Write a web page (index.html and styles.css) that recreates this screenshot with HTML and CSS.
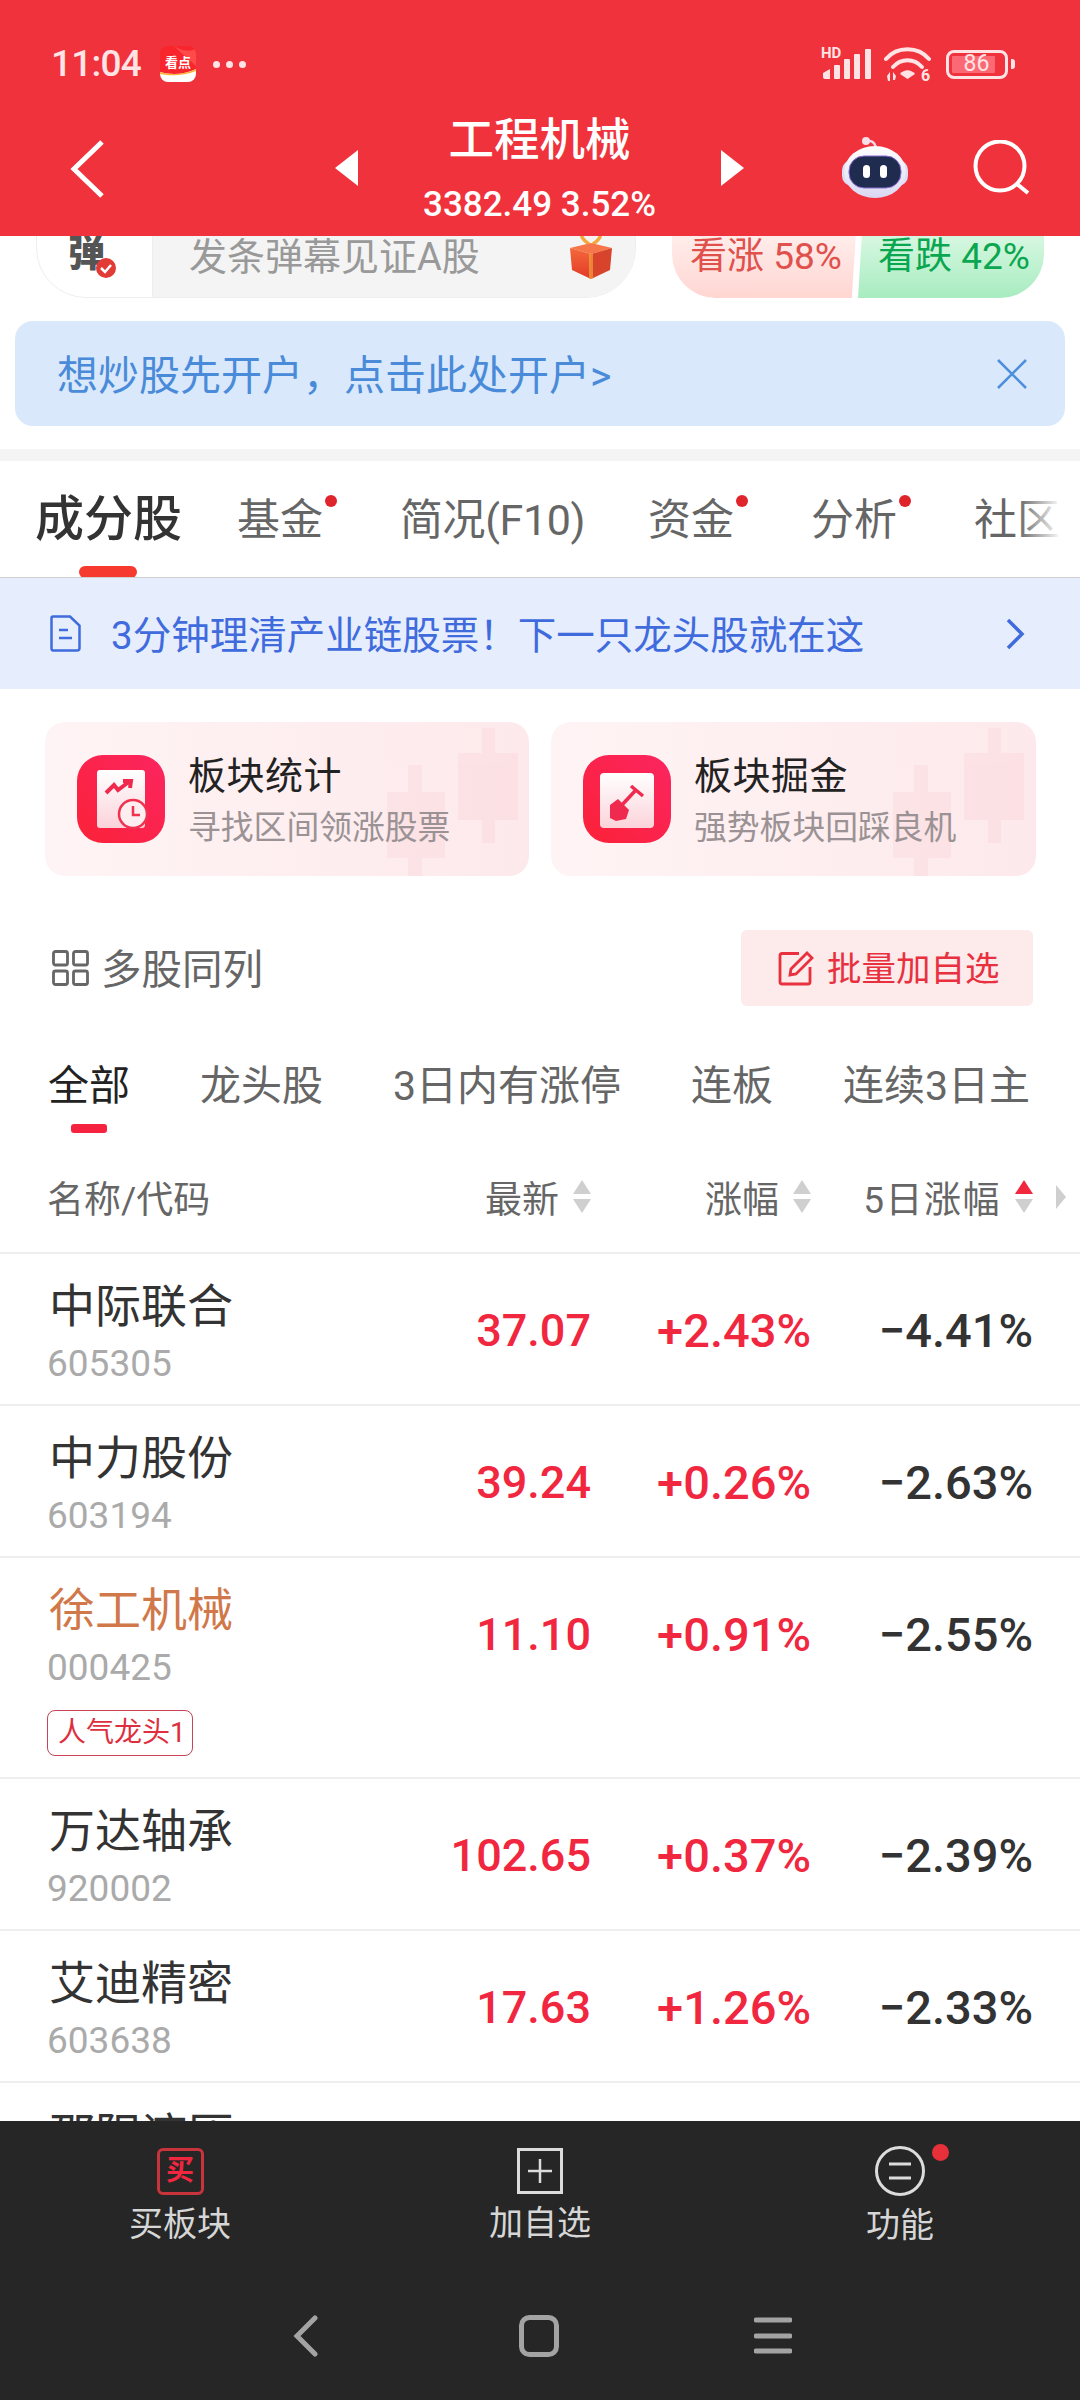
FILE: index.html
```html
<!DOCTYPE html>
<html lang="zh">
<head>
<meta charset="utf-8">
<title>工程机械</title>
<link rel="stylesheet" href="styles.css">
</head>
<body>
<div class="phone">
  <header class="top">
    <div class="status">
      <span class="clock">11:04</span>
      <svg class="appicon" width="36" height="36" viewBox="0 0 36 36">
        <defs><clipPath id="ac"><rect width="36" height="36" rx="8"/></clipPath></defs>
        <g clip-path="url(#ac)">
          <rect width="36" height="36" fill="#f9252d"/>
          <path d="M14 0c10 6 18 6 22 2v18c-6-6-14-12-22-20z" fill="#ff4a4a"/>
          <path d="M0 26c10 3 24 3 36-3v13H0z" fill="#fff"/>
          <path d="M0 26c10 3 24 3 36-3v2c-12 5-26 5-36 3z" fill="#ffb23a"/>
          <text class="appicon-txt" x="18" y="21" text-anchor="middle">看点</text>
        </g>
      </svg>
      <span class="more"><i></i><i></i><i></i></span>
      <span class="status-fill"></span>
      <span class="signal">
        <span class="hd">HD</span>
        <svg class="bars" width="48" height="30" viewBox="0 0 48 30"><g fill="#ffe3e5"><path d="M0 24l7-4v10H2q-2 0-2-2z"/><rect x="11" y="16" width="6" height="14" rx="1"/><rect x="21" y="10" width="6" height="20" rx="1"/><rect x="31" y="5" width="6" height="25" rx="1"/><rect x="42" y="0" width="6" height="30" rx="1"/></g></svg>
      </span>
      <svg class="wifi" width="52" height="40" viewBox="0 0 52 40"><g fill="none" stroke="#ffe3e5" stroke-width="4" stroke-linecap="round"><path d="M2 12C13 -1 34 -1 45 12"/><path d="M9 20C17 11 30 11 38 20"/></g><path d="M16 27c4-5 11-5 15 0l-7.500 5z" fill="#ffe3e5"/><g fill="#ffe3e5"><path d="M3 29l3-4v9H4zM9 25l3 4-1 4H9z"/></g><text class="wifi6" x="37" y="34">6</text></svg>
      <span class="battery"><span class="battery-fill"><span class="battery-num">86</span></span></span>
      <span class="battery-cap"></span>
    </div>
    <div class="nav">
      <div class="nav-left">
        <svg width="36" height="60" viewBox="0 0 36 60"><path d="M32 3L4 30l28 27" fill="none" stroke="#fff" stroke-width="5"/></svg>
      </div>
      <div class="nav-center">
        <svg class="tri" width="24" height="36" viewBox="0 0 24 36"><path d="M23 0v36L0 18z" fill="#fff"/></svg>
        <div class="nav-title">
          <div class="title">工程机械</div>
          <div class="subtitle">3382.49 3.52%</div>
        </div>
        <svg class="tri" width="24" height="36" viewBox="0 0 24 36"><path d="M1 0v36l23-18z" fill="#fff"/></svg>
      </div>
      <div class="nav-right">
        <svg class="robot" width="68" height="62" viewBox="0 0 68 62">
          <defs><linearGradient id="rb" x1="0" y1="0" x2="0" y2="1"><stop offset="0" stop-color="#fff"/><stop offset="1" stop-color="#d9d8f2"/></linearGradient></defs>
          <path d="M26 6c4-3 9 1 9 8" fill="none" stroke="#f3d6e0" stroke-width="2.500"/>
          <circle cx="25" cy="5" r="4" fill="#f6dfe8"/>
          <rect x="1" y="24" width="66" height="26" rx="10" fill="#dcdcf5"/>
          <ellipse cx="34" cy="36" rx="31" ry="26" fill="url(#rb)"/>
          <rect x="8" y="20" width="52" height="32" rx="15" fill="#1f2c50" stroke="#8a6ccf" stroke-width="1"/>
          <rect x="22" y="29" width="7" height="13" rx="3.500" fill="#fff"/>
          <rect x="39" y="29" width="7" height="13" rx="3.500" fill="#fff"/>
        </svg>
        <svg class="search" width="58" height="56" viewBox="0 0 58 56"><circle cx="27" cy="26" r="24.500" fill="none" stroke="#fff" stroke-width="4"/><path d="M44 44l11 9" stroke="#fff" stroke-width="4" fill="none"/></svg>
      </div>
    </div>
  </header>

  <main class="main">
    <section class="danmu-row">
      <div class="danmu">
        <div class="danmu-badge"><span class="dan">弹</span><span class="check"><svg width="20" height="20" viewBox="0 0 20 20"><circle cx="10" cy="10" r="10" fill="#e23b36"/><path d="M5 10l4 4 6-7" fill="none" stroke="#fff" stroke-width="2.500"/></svg></span></div>
        <div class="danmu-input">
          <span>发条弹幕见证A股</span>
          <svg class="gift" width="46" height="44" viewBox="0 0 46 44">
            <defs><linearGradient id="gf" x1="0" y1="0" x2="0" y2="1"><stop offset="0" stop-color="#f4683c"/><stop offset="1" stop-color="#e23a26"/></linearGradient></defs>
            <path d="M21 9C15 5 12 1 15-2M25 9c6-4 9-8 6-11" fill="none" stroke="#f3a83c" stroke-width="3.500"/>
            <path d="M2 13l21-5 21 5-21 6z" fill="#f6764a"/>
            <path d="M2 13l21 6v25L4 35z" fill="url(#gf)"/>
            <path d="M44 13L23 19v25l19-9z" fill="#d8442b"/>
            <path d="M21 18.500h4V44h-4z" fill="#f3a83c" fill-opacity=".65"/>
          </svg>
        </div>
      </div>
      <div class="mood">
        <div class="mood-up">看涨 58%</div>
        <div class="mood-down">看跌 42%</div>
      </div>
    </section>

    <section class="banner">
      <span>想炒股先开户，点击此处开户&gt;</span>
      <svg width="30" height="30" viewBox="0 0 30 30"><path d="M1 1l28 28M29 1L1 29" stroke="#4d8fdc" stroke-width="2.500" fill="none"/></svg>
    </section>

    <div class="band"></div>

    <nav class="tabs">
      <div class="tab tab-on">成分股<span class="tab-line"></span></div>
      <div class="tab tab-dot">基金<i class="dot"></i></div>
      <div class="tab tab-plain">简况(F10)</div>
      <div class="tab tab-dot">资金<i class="dot"></i></div>
      <div class="tab tab-dot">分析<i class="dot"></i></div>
      <div class="tab">社区</div>
      <span class="tabs-fade"></span>
    </nav>

    <section class="strip">
      <svg class="strip-doc" width="31" height="37" viewBox="0 0 31 37"><path d="M3 1.500h17l9.500 9V33q0 2.500-2.500 2.500H3Q1.500 35.500 1.500 33V3Q1.500 1.500 3 1.500z" fill="none" stroke="#3f6bdd" stroke-width="2.500"/><path d="M9 15h9M9 23h13" stroke="#3f6bdd" stroke-width="2.500" fill="none"/></svg>
      <span class="strip-text">3分钟理清产业链股票！下一只龙头股就在这</span>
      <svg width="20" height="32" viewBox="0 0 20 32"><path d="M3 2l14 14L3 30" fill="none" stroke="#3f6bdd" stroke-width="3.500"/></svg>
    </section>

    <section class="cards">
      <article class="card">
        <svg class="candles" width="484" height="154" viewBox="0 0 484 154"><g fill="#f9c0c8" opacity=".2"><rect x="437" y="6" width="13" height="115"/><rect x="413" y="31" width="60" height="67"/><rect x="363" y="43" width="14" height="111"/><rect x="342" y="70" width="58" height="66"/></g></svg>
        <span class="card-icon">
          <svg width="88" height="88" viewBox="0 0 88 88">
            <defs><linearGradient id="pg" x1="0" y1="0" x2="0" y2="1"><stop offset="0" stop-color="#fff"/><stop offset="1" stop-color="#fbd3da"/></linearGradient></defs>
            <rect x="20" y="15" width="48" height="58" rx="3" fill="url(#pg)"/>
            <path d="M29 38l8-8 4 5 12-9m-7 0h8l-1 7" fill="none" stroke="#f02a4e" stroke-width="4"/>
            <circle cx="56" cy="59" r="14" fill="#fdeef0" stroke="#f0314f" stroke-width="2.500"/>
            <path d="M56 51v9h7" fill="none" stroke="#f0314f" stroke-width="2.500"/>
          </svg>
        </span>
        <div class="card-body">
          <div class="card-title">板块统计</div>
          <div class="card-sub">寻找区间领涨股票</div>
        </div>
      </article>
      <article class="card">
        <svg class="candles" width="484" height="154" viewBox="0 0 484 154"><g fill="#f9c0c8" opacity=".2"><rect x="437" y="6" width="13" height="115"/><rect x="413" y="31" width="60" height="67"/><rect x="363" y="43" width="14" height="111"/><rect x="342" y="70" width="58" height="66"/></g></svg>
        <span class="card-icon">
          <svg width="88" height="88" viewBox="0 0 88 88">
            <rect x="17" y="18" width="54" height="55" rx="4" fill="url(#pg)"/>
            <path d="M52 36L38 51" stroke="#f02a4e" stroke-width="3.500" fill="none"/>
            <path d="M48 31l12 10" stroke="#f02a4e" stroke-width="3.500" fill="none"/>
            <path d="M27 50l8-6 11 11-3 9-10 2-6-3z" fill="#f02a4e"/>
          </svg>
        </span>
        <div class="card-body">
          <div class="card-title">板块掘金</div>
          <div class="card-sub">强势板块回踩良机</div>
        </div>
      </article>
    </section>

    <section class="tools">
      <div class="tools-left">
        <svg width="37" height="36" viewBox="0 0 37 36"><g fill="none" stroke="#666" stroke-width="2.800"><rect x="1.500" y="1.500" width="14" height="13.500" rx="2"/><rect x="21.500" y="1.500" width="14" height="13.500" rx="2"/><rect x="1.500" y="21" width="14" height="13.500" rx="2"/><rect x="21.500" y="21" width="14" height="13.500" rx="2"/></g></svg>
        <span class="tools-text">多股同列</span>
      </div>
      <div class="batch">
        <svg width="36" height="36" viewBox="0 0 36 36"><path d="M21 3.500H4Q2 3.500 2 5.500V32q0 2 2 2h26q2 0 2-2V17" fill="none" stroke="#e8303f" stroke-width="2.800"/><path d="M12 25l1-6L29 3l5 5-16 16z" fill="none" stroke="#e8303f" stroke-width="2.800"/></svg>
        <span class="batch-text">批量加自选</span>
      </div>
    </section>

    <nav class="subtabs">
      <div class="subtab subtab-on">全部<span class="subtab-line"></span></div>
      <div class="subtab">龙头股</div>
      <div class="subtab">3日内有涨停</div>
      <div class="subtab">连板</div>
      <div class="subtab">连续3日主</div>
    </nav>

    <div class="thead">
      <div class="th-name">名称/代码</div>
      <div class="th">最新<svg class="sort" width="18" height="33" viewBox="0 0 18 33"><path d="M9 0l9 14H0z" fill="#cfcfcf"/><path d="M9 33L0 19h18z" fill="#cfcfcf"/></svg></div>
      <div class="th">涨幅<svg class="sort" width="18" height="33" viewBox="0 0 18 33"><path d="M9 0l9 14H0z" fill="#cfcfcf"/><path d="M9 33L0 19h18z" fill="#cfcfcf"/></svg></div>
      <div class="th th-wide"><span>5日涨幅</span><svg class="sort" width="18" height="33" viewBox="0 0 18 33"><path d="M9 0l9 14H0z" fill="#f0273f"/><path d="M9 33L0 19h18z" fill="#cfcfcf"/></svg></div>
      <div class="th-more"><svg width="10" height="24" viewBox="0 0 10 24"><path d="M0 0l10 12L0 24z" fill="#cfcfcf"/></svg></div>
    </div>

    <div class="row">
      <div class="stock"><div class="name">中际联合</div><div class="code">605305</div></div>
      <div class="num price">37.07</div><div class="num up">+2.43%</div><div class="num down">−4.41%</div>
    </div>
    <div class="row">
      <div class="stock"><div class="name">中力股份</div><div class="code">603194</div></div>
      <div class="num price">39.24</div><div class="num up">+0.26%</div><div class="num down">−2.63%</div>
    </div>
    <div class="row row-tag">
      <div class="stock"><div class="name name-hot">徐工机械</div><div class="code">000425</div><span class="tag">人气龙头1</span></div>
      <div class="num price">11.10</div><div class="num up">+0.91%</div><div class="num down">−2.55%</div>
    </div>
    <div class="row">
      <div class="stock"><div class="name">万达轴承</div><div class="code">920002</div></div>
      <div class="num price">102.65</div><div class="num up">+0.37%</div><div class="num down">−2.39%</div>
    </div>
    <div class="row">
      <div class="stock"><div class="name">艾迪精密</div><div class="code">603638</div></div>
      <div class="num price">17.63</div><div class="num up">+1.26%</div><div class="num down">−2.33%</div>
    </div>
    <div class="row">
      <div class="stock"><div class="name name-clipped">邵阳液压</div></div>
    </div>
  </main>

  <footer class="foot">
    <div class="actions">
      <div class="action">
        <span class="buy-icon">买</span>
        <span class="action-label">买板块</span>
      </div>
      <div class="action">
        <svg width="46" height="46" viewBox="0 0 46 46"><rect x="1.500" y="1.500" width="43" height="43" fill="none" stroke="#dcdcdc" stroke-width="3"/><path d="M23 11v24M11 23h24" stroke="#dcdcdc" stroke-width="2.500" fill="none"/></svg>
        <span class="action-label">加自选</span>
      </div>
      <div class="action action-fn">
        <svg width="50" height="50" viewBox="0 0 50 50"><circle cx="25" cy="25" r="23.500" fill="none" stroke="#dcdcdc" stroke-width="3"/><path d="M14 18h22M14 32h22" stroke="#dcdcdc" stroke-width="3" fill="none"/></svg>
        <i class="fn-dot"></i>
        <span class="action-label">功能</span>
      </div>
    </div>
    <div class="sysnav">
      <svg width="26" height="42" viewBox="0 0 26 42"><path d="M23 3L5 21l18 18" fill="none" stroke="#a3a3a3" stroke-width="5" stroke-linecap="round"/></svg>
      <svg width="40" height="42" viewBox="0 0 40 42"><rect x="2.500" y="2.500" width="35" height="37" rx="8" fill="none" stroke="#a3a3a3" stroke-width="5"/></svg>
      <svg width="38" height="38" viewBox="0 0 38 38"><path d="M2 3h34M2 19h34M2 34h34" stroke="#a3a3a3" stroke-width="5" stroke-linecap="round" fill="none"/></svg>
    </div>
  </footer>
</div>
</body>
</html>
```

FILE: styles.css
```css
* { box-sizing: border-box; }
html, body { margin: 0; padding: 0; background: #fff; }
body { font-family: Roboto, "Noto Sans CJK SC", sans-serif; }
i { display: block; font-style: normal; }
svg { display: block; flex: none; }

.phone { width: 1080px; height: 2400px; display: flex; flex-direction: column; overflow: hidden; background: #fff; }

/* header */
.top { height: 236px; flex: none; background: #f0323c; color: #fff; }
.status { height: 100px; padding: 28px 65px 0 51px; display: flex; align-items: center; }
.clock { font-size: 37px; line-height: 44px; color: #ffe3e5; width: 109px; letter-spacing: -.8px; font-weight: 500; }
.appicon-txt { font-size: 13px; font-weight: 700; fill: #fff; }
.more { display: flex; gap: 6px; margin-left: 17px; }
.more i { width: 7px; height: 7px; border-radius: 50%; background: #ffe3e5; }
.status-fill { flex: 1; }
.signal { position: relative; width: 48px; height: 30px; }
.hd { position: absolute; left: -2px; top: -4px; font-size: 15px; line-height: 16px; font-weight: 700; color: #ffe3e5; }
.bars { position: absolute; left: 0; top: 0; }
.wifi { margin: 6px -5px 0 13px; }
.wifi6 { font-size: 16px; font-weight: 700; fill: #ffe3e5; }
.battery { width: 62px; height: 29px; margin-left: 15px; border: 3px solid #ffe3e5; border-radius: 8px; padding: 3px 10px 3px 3px; display: flex; }
.battery-fill { flex: 1; background: #fb6a74; display: flex; align-items: center; justify-content: center; border-radius: 1px; }
.battery-num { font-size: 23px; line-height: 20px; color: #ffe3e5; padding-left: 6px; }
.battery-cap { width: 4px; height: 10px; margin-left: 3px; background: #ffe3e5; border-radius: 0 3px 3px 0; }

.nav { height: 136px; display: grid; grid-template-columns: 335px 409px 336px; align-items: center; }
.nav-left { padding-left: 70px; padding-top: 2px; }
.nav-center { display: flex; justify-content: space-between; align-items: center; height: 100%; }
.nav-title { text-align: center; align-self: flex-start; padding-top: 13px; }
.title { font-size: 45.500px; line-height: 56px; font-weight: 500; }
.subtitle { font-size: 35px; line-height: 44px; margin-top: 14px; font-weight: 500; white-space: nowrap; }
.nav-right { display: flex; align-items: center; padding-left: 97px; gap: 64px; }
.robot { margin-top: -2px; }

/* main */
.main { flex: none; height: 1885px; overflow: hidden; }
.danmu-row { height: 62px; overflow: hidden; display: flex; align-items: flex-end; padding-left: 36px; }
.danmu { width: 600px; height: 100px; flex: none; display: flex; border: 1.5px solid #eee; border-radius: 0 0 50px 50px; overflow: hidden; }
.danmu-badge { width: 116px; position: relative; flex: none; border-right: 1.5px solid #eee; }
.dan { position: absolute; left: 31px; bottom: 20px; font-size: 37px; line-height: 44px; font-weight: 900; color: #555; }
.check { position: absolute; left: 59px; bottom: 19px; }
.danmu-input { flex: 1; background: #f4f4f4; display: flex; align-items: flex-end; justify-content: space-between; padding: 0 21px 18px 36px; font-size: 38px; line-height: 44px; color: #999; }
.mood { width: 372px; height: 100px; margin-left: 36px; flex: none; display: flex; font-size: 37px; line-height: 44px; border-radius: 0 0 44px 44px; overflow: hidden; }
.mood-up { width: 186px; padding: 0 0 19px 18px; display: flex; align-items: flex-end; background: linear-gradient(#ffecea 40%, #ffd6d2); color: #e0504c; clip-path: polygon(0 0, 100% 0, 96.700% 100%, 0 100%); white-space: nowrap; }
.mood-down { width: 186px; padding: 0 0 19px 20px; display: flex; align-items: flex-end; background: linear-gradient(#d5f7e0 40%, #a7ecc0); color: #0ba650; clip-path: polygon(3.300% 0, 100% 0, 100% 100%, 0 100%); white-space: nowrap; }

.banner { height: 105px; margin: 23px 15px; background: #d9e8fb; border-radius: 18px; display: flex; align-items: center; justify-content: space-between; padding: 0 38px 3px 42px; font-size: 41px; color: #4a8bd9; }
.banner svg { margin-top: 3px; }
.band { height: 12px; background: #f4f4f4; }

.tabs { position: relative; height: 117px; padding: 0 0 0 35px; display: flex; align-items: flex-start; border-bottom: 1.5px solid #cfcfcf; overflow: hidden; }
.tab { position: relative; font-size: 43px; line-height: 60px; margin-top: 29px; color: #666; white-space: nowrap; flex: none; }
.tab-on { font-size: 49px; font-weight: 500; color: #333; margin-right: 55px; }
.tab-dot { margin-right: 77px; }
.tab-plain { margin-right: 63px; letter-spacing: -.4px; }
.tab-line { position: absolute; left: 44px; top: 76px; width: 58px; height: 12px; border-radius: 6px; background: #f63a30; }
.dot { position: absolute; right: -14px; top: 5px; width: 12px; height: 12px; border-radius: 50%; background: #e0242c; }
.tabs-fade { position: absolute; left: 1018px; top: 0; width: 62px; height: 100%; background: linear-gradient(90deg, rgba(255,255,255,0), #fff 70%); }

.strip { height: 111px; background: #e6edfd; display: flex; align-items: center; padding: 0 55px 4px 50px; color: #3f6bdd; font-size: 38.500px; }
.strip svg { margin-top: 4px; }
.strip-text { flex: 1; padding-left: 30px; white-space: nowrap; }

.cards { margin: 33px 44px 0 45px; display: grid; grid-template-columns: 484px 485px; gap: 22px; }
.card { position: relative; height: 154px; border-radius: 20px; background: linear-gradient(90deg, #fff4f5, #fde9eb); display: flex; align-items: center; padding-left: 32px; overflow: hidden; }
.candles { position: absolute; left: 0; top: 0; }
.card-icon { position: relative; width: 88px; height: 88px; flex: none; border-radius: 26px; background: linear-gradient(45deg, #fb2238, #fb2560); display: block; }
.card-body { position: relative; margin-left: 23px; padding-top: 4px; }
.card-title { font-size: 38px; line-height: 48px; color: #222; letter-spacing: .5px; }
.card-sub { font-size: 32.800px; line-height: 44px; margin-top: 6px; color: #9a9294; white-space: nowrap; }

.tools { margin: 54px 47px 0 52px; height: 76px; display: flex; align-items: center; justify-content: space-between; }
.tools-left { display: flex; align-items: center; gap: 12px; font-size: 40.500px; color: #666; }
.tools-text { padding-bottom: 4px; }
.batch { width: 292px; height: 76px; border-radius: 6px; background: #fdeaeb; display: flex; align-items: center; gap: 13px; padding-left: 37px; font-size: 34.500px; color: #e8303f; }
.batch-text { padding-bottom: 4px; }

.subtabs { height: 87px; margin-top: 40px; padding-left: 48px; display: flex; gap: 70px; overflow: hidden; }
.subtab { position: relative; font-size: 41px; line-height: 74px; padding-top: 3px; color: #666; white-space: nowrap; flex: none; }
.subtab-on { color: #222; }
.subtab-line { position: absolute; left: 23px; top: 78px; width: 36px; height: 9px; border-radius: 3px; background: #f5233f; }

.thead { height: 121px; display: grid; grid-template-columns: 1fr 200px 220px 222px 33px; padding: 8px 14px 0 47px; align-items: center; font-size: 37px; color: #666; border-bottom: 2px solid #eee; }
.th { display: flex; justify-content: flex-end; align-items: center; gap: 14px; }
.th-wide span { letter-spacing: 1.500px; }
.th-more { display: flex; justify-content: flex-end; }

.row { display: grid; grid-template-columns: 1fr 200px 220px 222px; padding: 0 47px; border-bottom: 2px solid #eee; align-items: start; }
.row-tag .stock { padding-bottom: 21px; }
.stock { padding: 25px 0 18px; display: flex; flex-direction: column; align-items: flex-start; }
.name { font-size: 46px; line-height: 54px; color: #333; padding-left: 2px; }
.name-hot { color: #d1784a; }
.name-clipped { line-height: 20px; margin-top: 17px; }
.code { font-size: 37px; line-height: 44px; margin-top: 9px; color: #aaa; }
.tag { height: 46px; margin-top: 20px; padding: 0 6px 0 10px; border: 1.5px solid #c94456; border-radius: 8px; font-size: 28px; line-height: 43px; color: #dd2f40; white-space: nowrap; }
.num { height: 150px; font-size: 47px; line-height: 154px; font-weight: 500; text-align: right; white-space: nowrap; }
.price { font-size: 45px; color: #f0273f; }
.up { color: #f0273f; }
.down { color: #333; }

/* footer */
.foot { flex: 1; background: #262626; }
.actions { display: grid; grid-template-columns: repeat(3, 360px); padding-top: 25px; height: 150px; }
.action { position: relative; display: flex; flex-direction: column; align-items: center; justify-content: flex-start; padding-top: 2px; }
.buy-icon { width: 47px; height: 47px; border: 3px solid #c9333c; border-radius: 6px; font-size: 28px; line-height: 40px; font-weight: 700; text-align: center; color: #f0273f; }
.action-fn { padding-top: 0; }
.action-label { font-size: 34px; line-height: 44px; margin-top: 7px; color: #d6d6d6; }
.fn-dot { position: absolute; left: 212px; top: -2px; width: 17px; height: 17px; border-radius: 50%; background: #e8303a; }
.sysnav { display: flex; align-items: center; margin-top: 44px; padding-left: 292px; height: 42px; }
.sysnav svg:nth-child(2) { margin-left: 201px; }
.sysnav svg:nth-child(3) { margin-left: 195px; }
```
